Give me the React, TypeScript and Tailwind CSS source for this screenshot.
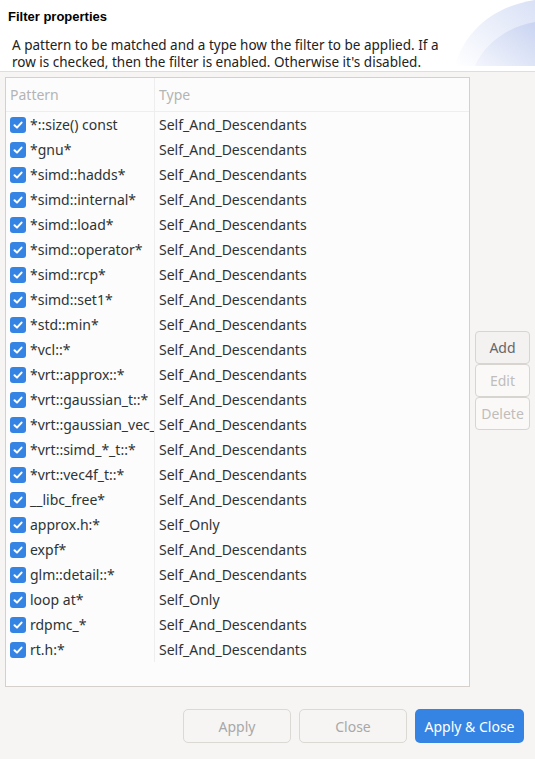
import React from "react";

const rows: [string, string][] = [
  ["*::size() const", "Self_And_Descendants"],
  ["*gnu*", "Self_And_Descendants"],
  ["*simd::hadds*", "Self_And_Descendants"],
  ["*simd::internal*", "Self_And_Descendants"],
  ["*simd::load*", "Self_And_Descendants"],
  ["*simd::operator*", "Self_And_Descendants"],
  ["*simd::rcp*", "Self_And_Descendants"],
  ["*simd::set1*", "Self_And_Descendants"],
  ["*std::min*", "Self_And_Descendants"],
  ["*vcl::*", "Self_And_Descendants"],
  ["*vrt::approx::*", "Self_And_Descendants"],
  ["*vrt::gaussian_t::*", "Self_And_Descendants"],
  ["*vrt::gaussian_vec_t::*", "Self_And_Descendants"],
  ["*vrt::simd_*_t::*", "Self_And_Descendants"],
  ["*vrt::vec4f_t::*", "Self_And_Descendants"],
  ["__libc_free*", "Self_And_Descendants"],
  ["approx.h:*", "Self_Only"],
  ["expf*", "Self_And_Descendants"],
  ["glm::detail::*", "Self_And_Descendants"],
  ["loop at*", "Self_Only"],
  ["rdpmc_*", "Self_And_Descendants"],
  ["rt.h:*", "Self_And_Descendants"],
];

function Check() {
  return (
    <span className="flex h-4 w-4 shrink-0 items-center justify-center rounded-[3px] bg-[#3584e4]">
      <svg width="12" height="12" viewBox="0 0 12 12">
        <path d="M2.5 6.2 L5 8.6 L9.6 3.6" fill="none" stroke="white" strokeWidth="2" strokeLinecap="round" strokeLinejoin="round" />
      </svg>
    </span>
  );
}

export default function App() {
  return (
    <div className="flex h-[759px] w-[535px] flex-col bg-[#f6f5f4] text-[#2e3436]" style={{ fontFamily: '"Noto Sans", sans-serif' }}>
      <div className="relative h-[72px] shrink-0 overflow-hidden border-b border-[#e0ddda] bg-white">
        <svg className="absolute right-0 top-0" width="80" height="66" viewBox="0 0 80 66">
          <defs>
            <linearGradient id="g1" x1="0" y1="1" x2="1" y2="0">
              <stop offset="0" stopColor="#ffffff" />
              <stop offset="1" stopColor="#d9e1f6" />
            </linearGradient>
            <linearGradient id="g2" x1="0" y1="1" x2="1" y2="0">
              <stop offset="0" stopColor="#f4f6fd" />
              <stop offset="1" stopColor="#c9d4f1" />
            </linearGradient>
          </defs>
          <path d="M0 66 C 10 30, 40 6, 80 0 L80 66 Z" fill="url(#g1)" />
          <path d="M20 66 C 30 42, 55 26, 80 22 L80 66 Z" fill="url(#g2)" />
        </svg>
        <div className="relative pl-2 pt-[7px] text-[13px] font-bold text-black" style={{ fontFamily: '"Liberation Sans", sans-serif' }}>
          Filter properties
        </div>
        <div className="relative pl-3 pt-[10px] text-[13.5px] leading-[17px] text-[#222]">
          <div>A pattern to be matched and a type how the filter to be applied. If a</div>
          <div>row is checked, then the filter is enabled. Otherwise it's disabled.</div>
        </div>
      </div>
      <div className="flex flex-1 pl-[5px] pr-[5px] pt-[5px]">
        <div className="flex h-[610px] w-[466px] flex-col border border-[#d5d0cc] bg-[#fcfcfc]">
          <div className="flex h-[34px] shrink-0 items-center border-b border-[#eeeeee] text-[14px] text-[#b4b4b4]">
            <div className="w-[148px] pl-[4px]">Pattern</div>
            <div className="h-full border-l border-[#eeeeee]" />
            <div className="pl-[4px]">Type</div>
          </div>
          <div className="flex flex-col">
            {rows.map(([p, t], i) => (
              <div key={i} className="flex h-[25px] items-center text-[14px]">
                <div className="flex w-[148px] items-center gap-[4px] overflow-hidden whitespace-nowrap pl-[4px]">
                  <Check />
                  <span>{p}</span>
                </div>
                <div className="h-full border-l border-[#eeeeee]" />
                <div className="pl-[4px] whitespace-nowrap">{t}</div>
              </div>
            ))}
          </div>
        </div>
        <div className="flex flex-col pl-[5px] pt-[254px]">
          {["Add", "Edit", "Delete"].map((b, i) => (
            <div
              key={b}
              className={`flex h-[33px] w-[55px] items-center justify-center rounded-[4px] border border-[#d8d4d0] text-[14px] ${i === 0 ? "bg-[#f4f2f1] text-[#666]" : "bg-[#faf9f8] text-[#c0bdbb]"}`}
            >
              {b}
            </div>
          ))}
        </div>
      </div>
      <div className="flex justify-end gap-2 pb-[16px] pr-[11px]">
        <div className="flex h-[34px] w-[108px] items-center justify-center rounded-[5px] border border-[#dcd8d4] bg-[#f6f5f4] text-[14px] text-[#a8a8a8]">Apply</div>
        <div className="flex h-[34px] w-[108px] items-center justify-center rounded-[5px] border border-[#dcd8d4] bg-[#f6f5f4] text-[14px] text-[#a8a8a8]">Close</div>
        <div className="flex h-[34px] w-[109px] items-center justify-center rounded-[5px] bg-[#3584e4] text-[14px] text-white">Apply &amp; Close</div>
      </div>
    </div>
  );
}
